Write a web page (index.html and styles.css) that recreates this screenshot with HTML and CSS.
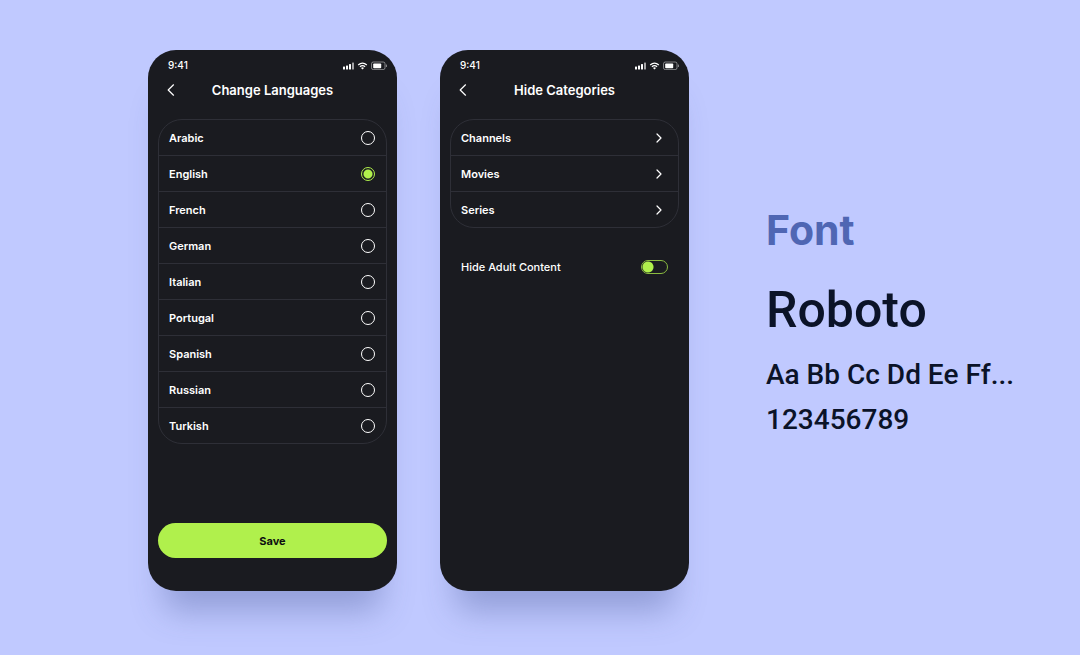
FILE: index.html
```html
<!DOCTYPE html>
<html lang="en">
<head>
    <meta charset="UTF-8">
    <meta name="viewport" content="width=device-width, initial-scale=1.0">
    <title>Change Languages</title>
    <link rel="stylesheet" href="styles.css">
</head>
<body>
    <svg class="sprite" aria-hidden="true">
        <symbol id="status" viewBox="0 0 45 10">
            <g fill="#fff">
                <rect x="1" y="6.5" width="2" height="3" rx=".5"/>
                <rect x="4" y="5.5" width="2" height="4" rx=".5"/>
                <rect x="7" y="4" width="2" height="5.5" rx=".5"/>
                <rect x="10" y="2.5" width="2" height="7" rx=".5" opacity=".6"/>
                <rect x="31.2" y="3.4" width="8" height="4.8" rx=".8"/>
            </g>
            <g fill="none" stroke="#fff">
                <path d="M16.2 5Q20.5 1.3 24.8 5" stroke-width="1.3"/>
                <path d="M17.9 6.8Q20.5 4.6 23.1 6.8" stroke-width="1.2"/>
                <rect x="29.5" y="2" width="13.5" height="7.6" rx="1.8" opacity=".45"/>
                <path d="M44.4 4.6v2.4" opacity=".5"/>
            </g>
            <path d="M19 7.9Q20.5 6.8 22 7.9L20.5 9.6Z" fill="#fff"/>
        </symbol>
        <symbol id="back" viewBox="0 0 8 12">
            <path d="M6.5 .8L1.2 6l5.3 5.2" fill="none" stroke="#fff" stroke-width="1.2" stroke-linecap="round" stroke-linejoin="round"/>
        </symbol>
        <symbol id="next" viewBox="0 0 6 10">
            <path d="M1 1l4 4-4 4" fill="none" stroke="#fff" stroke-width="1.2" stroke-linecap="round" stroke-linejoin="round"/>
        </symbol>
    </svg>

    <main class="container">
        <form class="phone">
            <div class="status-bar">
                <span>9:41</span>
                <svg class="status-icons"><use href="#status"/></svg>
            </div>
            <header class="title-bar">
                <button type="button" class="back" aria-label="Back"><svg><use href="#back"/></svg></button>
                <h1>Change Languages</h1>
            </header>
            <div class="list">
                <label class="row">Arabic <input type="radio" name="language"></label>
                <label class="row">English <input type="radio" name="language" checked></label>
                <label class="row">French <input type="radio" name="language"></label>
                <label class="row">German <input type="radio" name="language"></label>
                <label class="row">Italian <input type="radio" name="language"></label>
                <label class="row">Portugal <input type="radio" name="language"></label>
                <label class="row">Spanish <input type="radio" name="language"></label>
                <label class="row">Russian <input type="radio" name="language"></label>
                <label class="row">Turkish <input type="radio" name="language"></label>
            </div>
            <button type="button" class="save">Save</button>
        </form>

        <section class="phone">
            <div class="status-bar">
                <span>9:41</span>
                <svg class="status-icons"><use href="#status"/></svg>
            </div>
            <header class="title-bar">
                <button type="button" class="back" aria-label="Back"><svg><use href="#back"/></svg></button>
                <h1>Hide Categories</h1>
            </header>
            <nav class="list">
                <a class="row" href="#">Channels <svg class="next"><use href="#next"/></svg></a>
                <a class="row" href="#">Movies <svg class="next"><use href="#next"/></svg></a>
                <a class="row" href="#">Series <svg class="next"><use href="#next"/></svg></a>
            </nav>
            <label class="adult">Hide Adult Content <input type="checkbox" class="toggle"></label>
        </section>

        <section class="font-info">
            <h2>Font</h2>
            <p class="font-name">Roboto</p>
            <p>Aa Bb Cc Dd Ee Ff...</p>
            <p>123456789</p>
        </section>
    </main>
</body>
</html>
```
FILE: styles.css
```css
* {
    box-sizing: border-box;
}
body {
    font-family: Inter, sans-serif;
    background-color: #c0c9ff;
    color: #fff;
    margin: 0;
}
h1, h2, p {
    margin: 0;
}
button {
    font-family: inherit;
    border: none;
    padding: 0;
    cursor: pointer;
}
.sprite {
    display: none;
}
.container {
    display: flex;
    padding: 50px 60px 64px 148px;
}

/* phones */
.phone {
    display: flex;
    flex-direction: column;
    flex: 0 0 249px;
    min-height: 541px;
    margin-right: 43px;
    padding: 0 10px 33px;
    background-color: #1a1b20;
    border-radius: 28px;
    box-shadow: 0 36px 32px -16px rgba(60, 75, 140, 0.34);
}
.status-bar {
    display: flex;
    justify-content: space-between;
    align-items: center;
    height: 30px;
    padding-left: 10px;
    font-size: 10px;
    font-weight: 500;
}
.status-icons {
    width: 45px;
    height: 10px;
}
.title-bar {
    display: grid;
    grid-template-columns: 28px 1fr 28px;
    align-items: center;
    height: 20px;
    margin-bottom: 19px;
}
.back {
    display: flex;
    height: 20px;
    padding-left: 9px;
    align-items: center;
    background: none;
}
.back svg {
    width: 8px;
    height: 12px;
}
h1 {
    font-size: 13px;
    font-weight: 600;
    line-height: 20px;
    text-align: center;
    white-space: nowrap;
}
.list {
    border: 1px solid #2e2f37;
    border-radius: 24px;
}
.row {
    display: flex;
    justify-content: space-between;
    align-items: center;
    height: 35px;
    padding: 0 11px 0 10px;
    color: #fff;
    font-size: 11px;
    font-weight: 600;
    text-decoration: none;
}
.row + .row {
    height: 36px;
    border-top: 1px solid #2e2f37;
}
.row input {
    appearance: none;
    width: 14px;
    height: 14px;
    margin: 0;
    border: 1px solid #fff;
    border-radius: 50%;
}
.row input:checked {
    border-color: #b0f04c;
    background: radial-gradient(circle, #b0f04c 4px, transparent 5px);
}
.next {
    width: 6px;
    height: 10px;
    margin-right: 5px;
}
.save {
    height: 35px;
    margin-top: auto;
    border-radius: 18px;
    background-color: #b0f04c;
    color: #0d0e10;
    font-size: 11px;
    font-weight: 700;
}
.adult {
    display: flex;
    justify-content: space-between;
    align-items: center;
    margin-top: 32px;
    padding: 0 11px;
    font-size: 11px;
    font-weight: 500;
}
.toggle {
    appearance: none;
    width: 27px;
    height: 14px;
    margin: 0;
    border: 1px solid #8abb40;
    border-radius: 7px;
    background: radial-gradient(circle at 6px 6px, #b0f04c 5px, transparent 6px);
}
.toggle:checked {
    background: radial-gradient(circle at 19px 6px, #b0f04c 5px, transparent 6px);
}

/* font sample */
.font-info {
    padding: 154px 0 0 34px;
    color: #0b1328;
    font-family: Roboto, sans-serif;
    font-size: 28px;
    font-weight: 500;
    line-height: 45px;
    white-space: nowrap;
}
h2 {
    color: #4f66b3;
    font-family: Inter, sans-serif;
    font-size: 41px;
    font-weight: 700;
    line-height: 52px;
}
.font-name {
    margin: 24px 0 12px;
    font-size: 50px;
    line-height: 60px;
}
```
